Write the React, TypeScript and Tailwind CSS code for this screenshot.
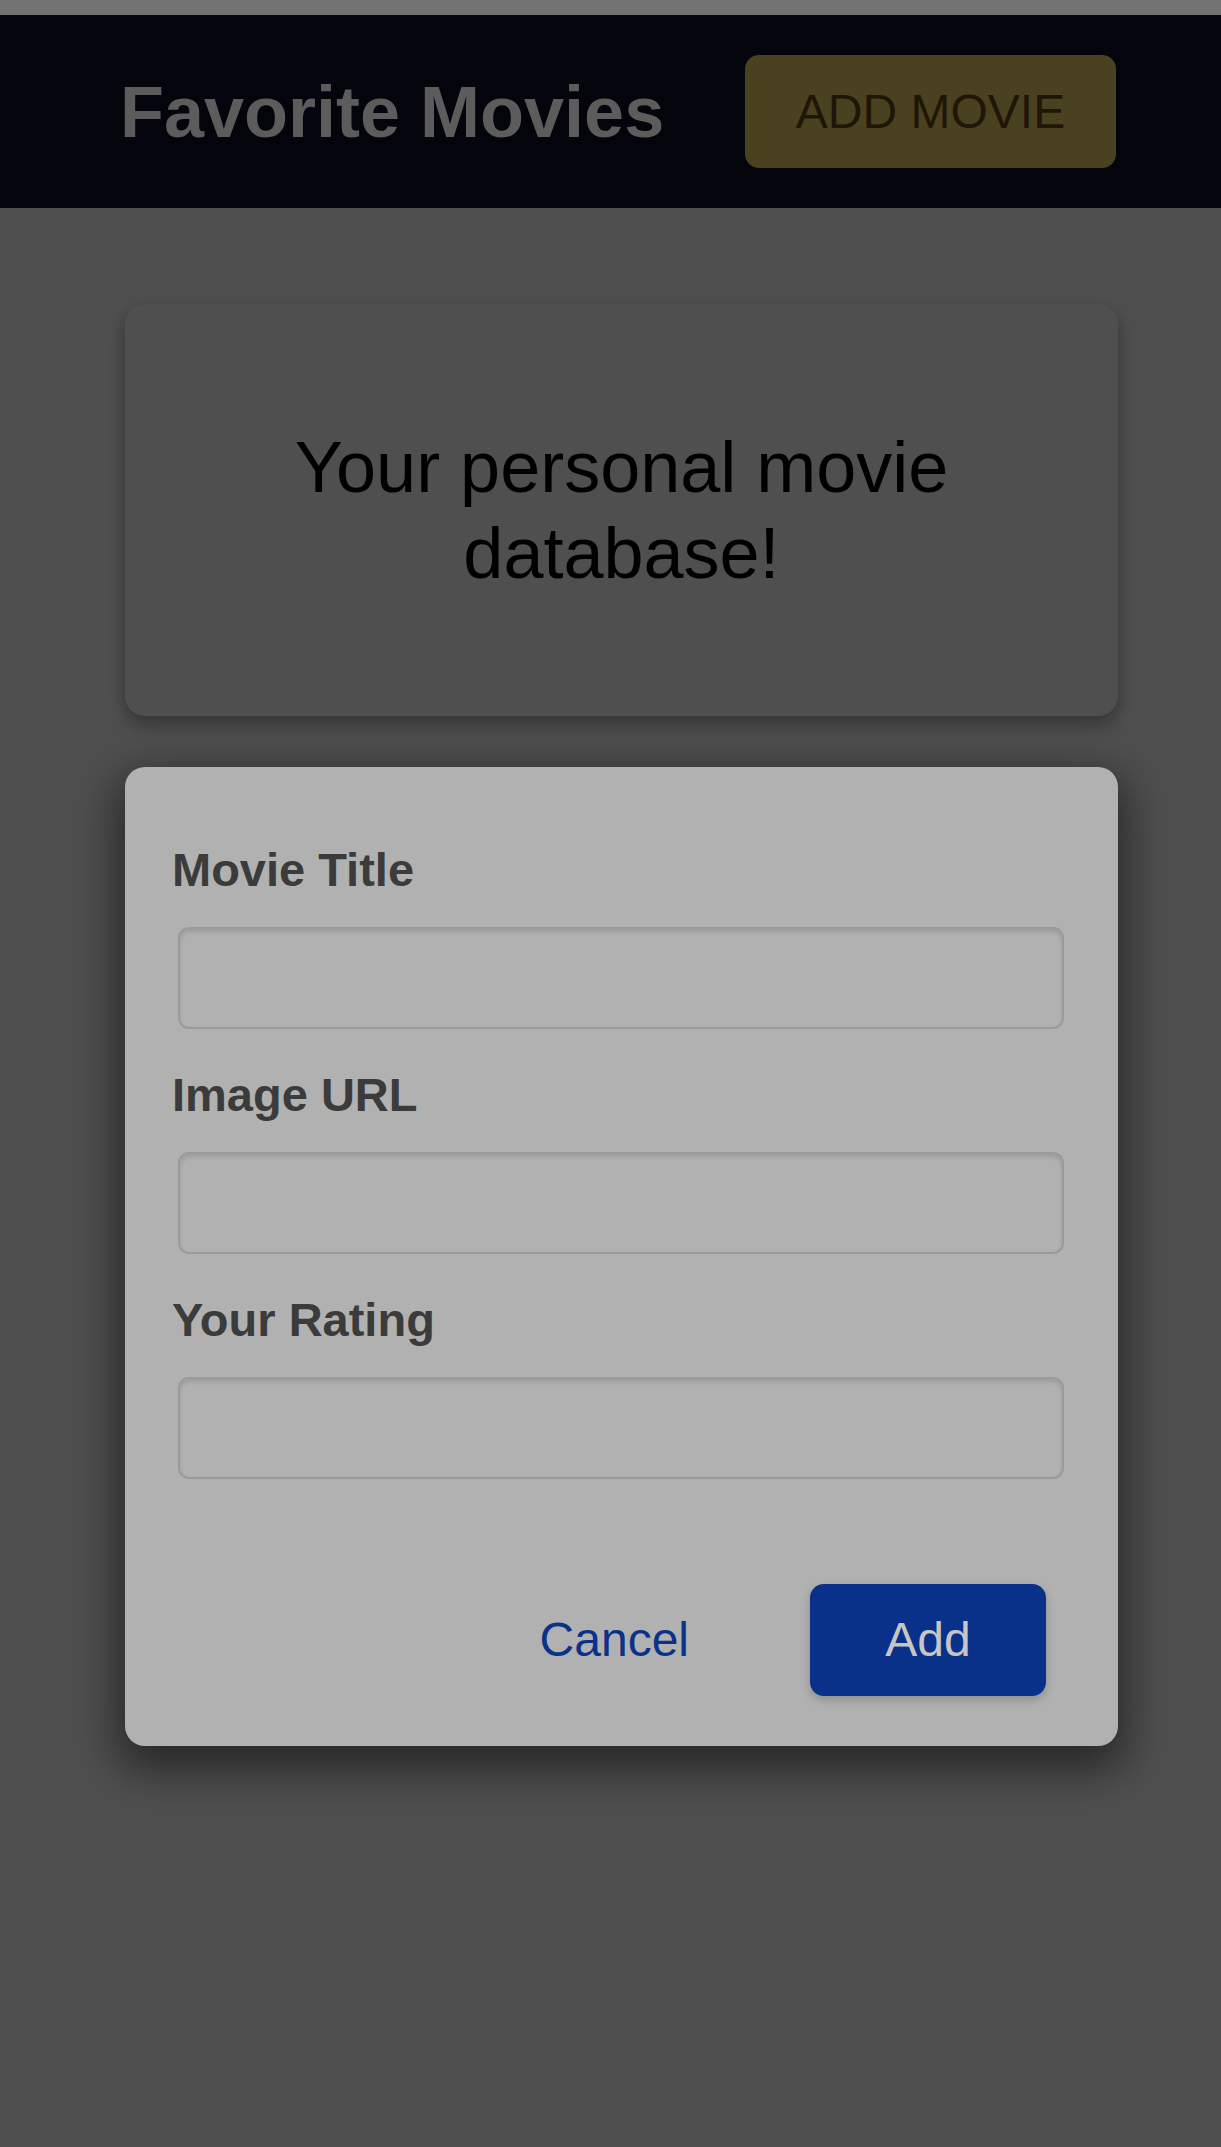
import React from 'react'

const fields = ['Movie Title', 'Image URL', 'Your Rating']

export default function App() {
  return (
    <div className="min-h-[2147px] bg-[#4f4f4f] font-['Liberation_Sans',Arial,sans-serif]">
      <div className="h-[15px] bg-[#727272]" />
      <header className="h-[193px] bg-[#03040c] flex items-center justify-between pl-[120px] pr-[105px]">
        <h1 className="text-[72px] font-bold leading-none text-[#5c5c5c]">Favorite Movies</h1>
        <button className="w-[371px] h-[113px] rounded-[14px] bg-[#4a4120] text-[48px] text-[#1f1608]">
          ADD MOVIE
        </button>
      </header>

      <main className="pl-[125px] pr-[103px] pt-[96px]">
        <div className="h-[412px] rounded-[20px] bg-[#4f4f4f] shadow-[0_8px_18px_rgba(0,0,0,0.35)] flex items-center justify-center">
          <p className="max-w-[720px] text-center text-[72px] leading-[86px] text-black">
            Your personal movie database!
          </p>
        </div>

        <div className="mt-[51px] rounded-[20px] bg-[#b1b1b1] pt-[74px] pb-[50px] px-[47px] shadow-[0_16px_45px_8px_rgba(0,0,0,0.5)]">
          {fields.map((label, i) => (
            <div key={label} className={i > 0 ? 'mt-[37px]' : ''}>
              <label className="block h-[57px] leading-[57px] text-[47px] font-bold text-[#3b3b3b]">{label}</label>
              <input className="block mt-[29px] ml-[6px] mr-[7px] w-[calc(100%-13px)] h-[102px] rounded-[11px] border-2 border-[#9a9a9a] bg-transparent shadow-[inset_0_3px_4px_rgba(0,0,0,0.12)] outline-none" />
            </div>
          ))}

          <div className="mt-[105px] flex items-center justify-end pr-[25px]">
            <button className="mr-[121px] text-[48px] text-[#0b3189]">Cancel</button>
            <button className="w-[236px] h-[112px] rounded-[14px] bg-[#0a3189] text-[48px] text-[#c6c6c6] shadow-[0_4px_10px_rgba(0,0,0,0.2)]">
              Add
            </button>
          </div>
        </div>
      </main>
    </div>
  )
}
